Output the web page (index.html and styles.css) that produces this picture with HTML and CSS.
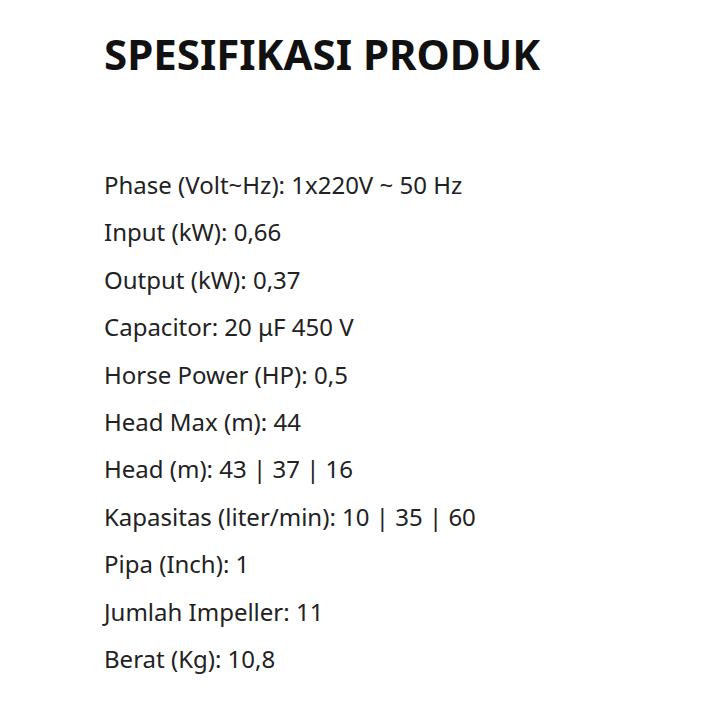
FILE: index.html
```html
<!DOCTYPE html>
<html lang="id">
<head>
<meta charset="utf-8">
<link rel="stylesheet" href="styles.css">
</head>
<body>
<div class="page">
  <h1 class="title">SPESIFIKASI PRODUK</h1>
  <ul class="specs">
    <li>Phase (Volt~Hz): 1x220V ~ 50 Hz</li>
    <li>Input (kW): 0,66</li>
    <li>Output (kW): 0,37</li>
    <li>Capacitor: 20 μF 450 V</li>
    <li>Horse Power (HP): 0,5</li>
    <li>Head Max (m): 44</li>
    <li>Head (m): 43 | 37 | 16</li>
    <li>Kapasitas (liter/min): 10 | 35 | 60</li>
    <li>Pipa (Inch): 1</li>
    <li>Jumlah Impeller: 11</li>
    <li>Berat (Kg): 10,8</li>
  </ul>
</div>
</body>
</html>
```
FILE: styles.css
```css
html, body {
  margin: 0;
  padding: 0;
  background: #ffffff;
}
.page {
  padding: 28px 0 0 104px;
  font-family: "Noto Sans", "Open Sans", sans-serif;
  color: #1a1a1a;
}
.title {
  margin: 0;
  font-size: 42px;
  font-weight: 700;
  line-height: 52px;
  color: #111;
}
.specs {
  list-style: none;
  margin: 0;
  padding: 0;
  padding-top: 81px;
  font-size: 24px;
  line-height: 47.4px;
  color: #222;
}
```
